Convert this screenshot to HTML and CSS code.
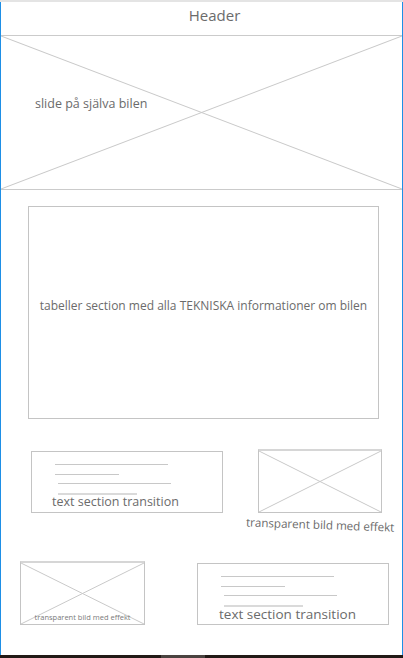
FILE: index.html
```html
<!DOCTYPE html>
<html lang="sv">
<head>
<meta charset="utf-8">
<title>Wireframe</title>
<link rel="stylesheet" href="styles.css">
</head>
<body>
<div class="window">
  <div class="page">
    <header class="header">Header</header>
    <section class="hero">
      <svg class="xmark" preserveAspectRatio="none" viewBox="0 0 100 100">
        <line x1="0" y1="0" x2="100" y2="100" vector-effect="non-scaling-stroke"/>
        <line x1="0" y1="100" x2="100" y2="0" vector-effect="non-scaling-stroke"/>
      </svg>
      <span class="hero-text">slide på själva bilen</span>
    </section>
    <section class="tables">
      <span class="tables-text">tabeller section med alla TEKNISKA informationer om bilen</span>
    </section>
    <div class="row row-one">
      <div class="textbox tb-one">
        <div class="tl tl-a"></div>
        <div class="tl tl-b"></div>
        <div class="tl tl-c"></div>
        <div class="tl tl-d"></div>
        <span class="tb-text">text section transition</span>
      </div>
      <figure class="figure">
        <div class="img img-one">
          <svg class="xmark" preserveAspectRatio="none" viewBox="0 0 100 100">
            <line x1="0" y1="0" x2="100" y2="100" vector-effect="non-scaling-stroke"/>
            <line x1="0" y1="100" x2="100" y2="0" vector-effect="non-scaling-stroke"/>
          </svg>
        </div>
        <figcaption class="caption">transparent bild med effekt</figcaption>
      </figure>
    </div>
    <div class="row row-two">
      <div class="img img-two">
        <svg class="xmark" preserveAspectRatio="none" viewBox="0 0 100 100">
          <line x1="0" y1="0" x2="100" y2="100" vector-effect="non-scaling-stroke"/>
          <line x1="0" y1="100" x2="100" y2="0" vector-effect="non-scaling-stroke"/>
        </svg>
        <span class="small-caption">transparent bild med effekt</span>
      </div>
      <div class="textbox tb-two">
        <div class="tl tl-a"></div>
        <div class="tl tl-b"></div>
        <div class="tl tl-c"></div>
        <div class="tl tl-d"></div>
        <span class="tb-text tb-text-lg">text section transition</span>
      </div>
    </div>
  </div>
  <div class="taskbar"><div class="task-item"></div></div>
</div>
</body>
</html>
```
FILE: styles.css
```css
html, body {
  margin: 0;
  padding: 0;
  background: #ffffff;
}
body {
  font-family: "Open Sans", "Noto Sans", sans-serif;
  color: #6b6b6b;
}
.window {
  width: 403px;
  height: 658px;
  box-sizing: border-box;
  border-top: 2px solid #e4e4e4;
  display: flex;
  flex-direction: column;
  overflow: hidden;
}
.page {
  flex: 1;
  border-left: 1px solid #1e8fe6;
  border-right: 1px solid #1e8fe6;
  display: flex;
  flex-direction: column;
  min-height: 0;
}
.header {
  height: 33px;
  text-align: center;
  font-size: 15px;
  line-height: 26px;
  padding-left: 26px;
  box-sizing: border-box;
}
.hero {
  position: relative;
  height: 155px;
  box-sizing: border-box;
  border-top: 1px solid #cbcbcb;
  border-bottom: 1px solid #cbcbcb;
  padding: 55px 0 0 34px;
}
.xmark {
  position: absolute;
  left: 0;
  top: 0;
  width: 100%;
  height: 100%;
}
.xmark line {
  stroke: #c9c9c9;
  stroke-width: 1;
}
.hero-text {
  position: relative;
  font-size: 12.5px;
  line-height: 18px;
}
.tables {
  margin: 16px 0 0 27px;
  width: 351px;
  height: 213px;
  box-sizing: border-box;
  border: 1px solid #c4c4c4;
  display: flex;
  align-items: center;
  justify-content: center;
  padding-bottom: 14px;
}
.tables-text {
  font-size: 12px;
  white-space: nowrap;
}
.row {
  display: flex;
  align-items: flex-start;
}
.row-one {
  margin-top: 30px;
  height: 112px;
}
.textbox {
  width: 192px;
  height: 62px;
  box-sizing: border-box;
  border: 1px solid #c4c4c4;
  display: flex;
  flex-direction: column;
  padding-top: 12px;
}
.tb-one {
  margin: 2px 0 0 30px;
}
.tb-two {
  margin: 2px 0 0 52px;
}
.tl {
  height: 1px;
  background: #c8c8c8;
  margin-bottom: 9px;
}
.tl-a { width: 113px; margin-left: 23px; }
.tl-b { width: 64px; margin-left: 23px; margin-bottom: 8px; }
.tl-c { width: 113px; margin-left: 26px; }
.tl-d { width: 79px; margin-left: 26px; height: 2px; background: #dadada; margin-bottom: 0; }
.tb-text {
  font-size: 12.5px;
  line-height: 14px;
  margin-top: 0;
  margin-left: 20px;
  white-space: nowrap;
}
.tb-text-lg {
  font-size: 13.5px;
  margin-left: 21px;
}
.figure {
  margin: 0 0 0 35px;
  width: 124px;
  display: flex;
  flex-direction: column;
  align-items: center;
}
.img {
  position: relative;
  box-sizing: border-box;
  border: 1px solid #c4c4c4;
}
.img-one {
  width: 124px;
  height: 64px;
  border-top: 2px solid #d6d6d6;
}
.caption {
  margin-top: 5px;
  font-size: 11.6px;
  line-height: 14px;
  white-space: nowrap;
  transform: rotate(2deg);
}
.img-two {
  margin-left: 19px;
  width: 125px;
  height: 64px;
  border-top: 2px solid #d6d6d6;
  display: flex;
  align-items: flex-end;
  justify-content: center;
  padding-bottom: 2px;
}
.small-caption {
  position: relative;
  font-size: 7.5px;
  line-height: 10px;
  white-space: nowrap;
  color: #7a7a7a;
}
.taskbar {
  height: 3px;
  background: #221a16;
  display: flex;
}
.task-item {
  margin-left: 161px;
  width: 44px;
  background: #4a4340;
}
```
